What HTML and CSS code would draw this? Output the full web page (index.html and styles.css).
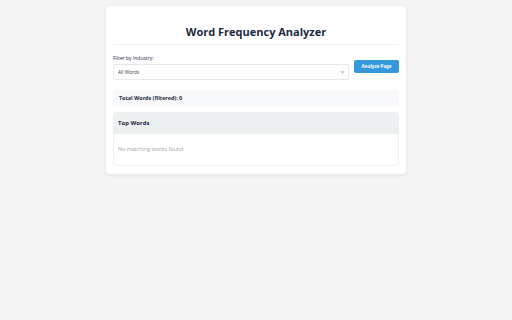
FILE: index.html
```html
<!DOCTYPE html>
<html lang="en">
<head>
<meta charset="utf-8">
<title>Word Frequency Analyzer</title>
<link rel="stylesheet" href="styles.css">
</head>
<body>
<div class="card">
  <h1 class="title">Word Frequency Analyzer</h1>
  <div class="controls">
    <div class="filter">
      <label class="label" for="industry">Filter by Industry:</label>
      <div class="select">
        <span>All Words</span>
        <svg class="chev" width="5" height="4" viewBox="0 0 5 4"><path d="M0.8 1.2 L2.5 2.8 L4.2 1.2" fill="none" stroke="#666" stroke-width="0.7"/></svg>
      </div>
    </div>
    <button class="btn">Analyze Page</button>
  </div>
  <div class="stats">Total Words (filtered): 0</div>
  <div class="panel">
    <div class="panel-head">Top Words</div>
    <div class="panel-body">No matching words found</div>
  </div>
</div>
</body>
</html>
```
FILE: styles.css
```css
html, body { margin: 0; padding: 0; }
body {
  background: #f4f4f4;
  font-family: "Open Sans", "Noto Sans", sans-serif;
  color: #1c2942;
  height: 320px;
}
.card {
  width: 286px;
  margin: 6px auto 0;
  background: #fff;
  border-radius: 4px;
  box-shadow: 0 1px 4px rgba(0,0,0,0.08);
  padding: 18px 7px 8px;
}
.title {
  margin: 0;
  font-size: 11px;
  line-height: 16px;
  font-weight: 700;
  text-align: center;
  color: #1c2942;
  padding-bottom: 4px;
  border-bottom: 1px solid #f0f1f2;
}
.controls {
  display: flex;
  align-items: center;
  gap: 5px;
  margin-top: 9px;
}
.filter { flex: 1; }
.label {
  display: block;
  font-size: 5px;
  line-height: 8px;
  color: #1c2942;
  margin-bottom: 2px;
}
.select {
  height: 14px;
  border: 1px solid #e6e8ea;
  border-radius: 2px;
  display: flex;
  align-items: center;
  justify-content: space-between;
  padding: 0 3px 0 4px;
  font-size: 4.8px;
  color: #333;
}
.btn {
  width: 45px;
  height: 13px;
  border: none;
  border-radius: 2px;
  background: #3498db;
  color: #fff;
  font-family: inherit;
  font-size: 4.6px;
  font-weight: 700;
  padding: 0;
  margin-bottom: 2px;
}
.stats {
  margin-top: 10px;
  background: #f8f9fa;
  height: 16px;
  line-height: 16px;
  padding: 0 6px;
  font-size: 5.4px;
  font-weight: 700;
  border-radius: 2px;
}
.panel {
  margin-top: 6px;
  border: 1px solid #eef0f1;
  border-radius: 3px;
}
.panel-head {
  background: #ecf0f1;
  height: 21px;
  line-height: 21px;
  padding: 0 4px;
  font-size: 6px;
  font-weight: 700;
}
.panel-body {
  padding: 11px 4px 12px;
  font-size: 5.4px;
  line-height: 8px;
  color: #a0aab0;
}
```
